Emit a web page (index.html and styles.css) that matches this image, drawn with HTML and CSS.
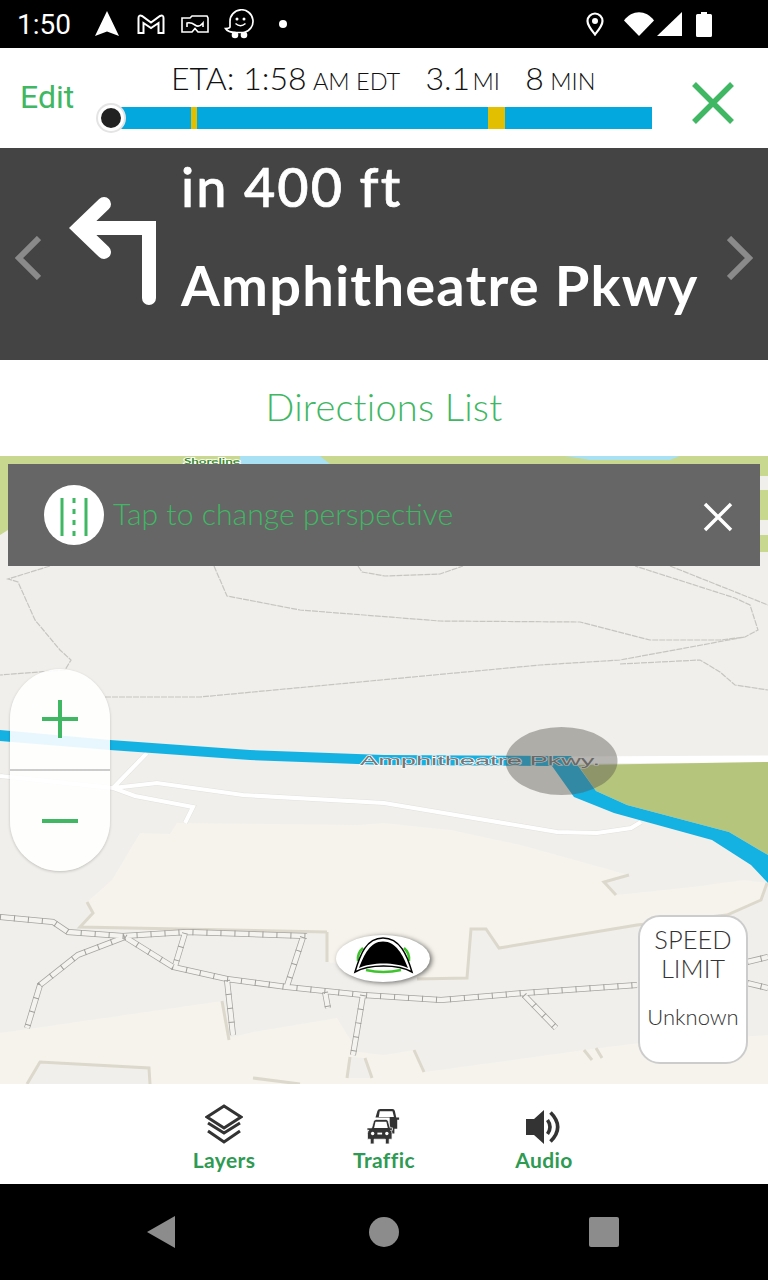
FILE: index.html
```html
<!DOCTYPE html>
<html lang="en">
<head>
    <meta charset="UTF-8">
    <meta name="viewport" content="width=device-width, initial-scale=1.0">
    <title>Navigation</title>
    <link rel="stylesheet" href="styles.css">
</head>
<body>
    <div class="status-bar">
        <span class="clock">1:50</span>
        <svg class="st-nav" viewBox="0 0 24 26"><path d="M12 0 24 25 12 20.500 0 25Z" fill="#fff"/></svg>
        <svg class="st-mail" viewBox="0 0 28 20"><path d="M1.500 4Q1.500 .5 5 2L14 8.500 23 2Q26.500 .5 26.500 4V19H21.500V9L14 14 6.500 9V19H1.500Z" fill="none" stroke="#fff" stroke-width="2"/></svg>
        <svg class="st-map" viewBox="0 0 28 18"><path d="M1 3H9L11 1H26L27 3V17H17L14 13.500 11 17H1Z" fill="none" stroke="#fff" stroke-width="1.600"/><path d="M6 12V8Q10 7 14 10T22 8V12" fill="none" stroke="#fff" stroke-width="1.600"/></svg>
        <svg class="st-waze" viewBox="0 0 30 30"><path d="M6 18C6 16 6 14 6 12.500A11.500 11.500 0 1 1 20 23.500H12C8 23.500 3 22 1.500 19.500 3 19.500 5.500 19.500 6 18Z" fill="none" stroke="#fff" stroke-width="1.700"/><circle cx="11" cy="26" r="3.300" fill="#fff"/><circle cx="20" cy="26" r="3.300" fill="#fff"/><circle cx="13" cy="10" r="1.500" fill="#fff"/><circle cx="20" cy="10" r="1.500" fill="#fff"/><path d="M11.500 14.500Q16.500 19 21.500 14.500" fill="none" stroke="#fff" stroke-width="1.500"/></svg>
        <span class="st-dot"></span>
        <span class="st-spacer"></span>
        <svg class="st-pin" viewBox="0 0 18 24"><path d="M9 22.500C5 17.500 1.500 13.500 1.500 9A7.500 7.500 0 0 1 16.500 9C16.500 13.500 13 17.500 9 22.500Z" fill="none" stroke="#fff" stroke-width="2.200"/><circle cx="9" cy="9" r="3" fill="#fff"/></svg>
        <svg class="st-wifi" viewBox="0 0 30 24"><path d="M0 8.500C8 -2.500 22 -2.500 30 8.500L15 24Z" fill="#fff"/></svg>
        <svg class="st-cell" viewBox="0 0 25 24"><path d="M25 0V24H0Z" fill="#fff"/></svg>
        <svg class="st-batt" viewBox="0 0 16 25"><path d="M5 0H11V2H14.500Q16 2 16 3.500V23.500Q16 25 14.500 25H1.500Q0 25 0 23.500V3.500Q0 2 1.500 2H5Z" fill="#fff"/></svg>
    </div>

    <div class="trip-bar">
        <div class="edit-btn">Edit</div>
        <div class="trip-info">
            <div class="trip-meta">
                <span class="big">ETA: 1:58</span> <span class="small">AM EDT</span>
                <span class="big gap">3.1</span> <span class="small tight">MI</span>
                <span class="big gap">8</span> <span class="small">MIN</span>
            </div>
            <div class="progress">
                <span class="knob"></span>
                <span class="slow slow-a"></span>
                <span class="slow slow-b"></span>
            </div>
        </div>
        <svg class="close-btn" viewBox="0 0 44 44"><path d="M3 3 41 41M41 3 3 41" stroke="#3fb763" stroke-width="5.500" fill="none"/></svg>
    </div>

    <div class="turn-panel">
        <svg class="chev" viewBox="0 0 26 44"><path d="M24 2 4 22 24 42" fill="none" stroke="#8a8a8a" stroke-width="6"/></svg>
        <svg class="turn-arrow" viewBox="0 0 88 110"><path d="M80 102V32H10M35 8 10 32 35 56" fill="none" stroke="#fff" stroke-width="14" stroke-linecap="round" stroke-linejoin="miter"/></svg>
        <div class="turn-text">
            <div class="turn-dist">in 400 ft</div>
            <div class="turn-road">Amphitheatre Pkwy</div>
        </div>
        <svg class="chev chev-right" viewBox="0 0 26 44"><path d="M2 2 22 22 2 42" fill="none" stroke="#8a8a8a" stroke-width="6"/></svg>
    </div>

    <div class="directions-link">Directions List</div>

    <div class="map">
        <svg class="map-canvas" viewBox="0 456 768 628">
            <defs>
                <path id="paths" d="M0 917 53 922 68 932 123 936 187 932 307 936M125 937 78 955 40 985 27 1028M125 937 173 967 227 979 287 987 363 995 441 1000 524 993 637 985M185 933 175 966M303 937 287 986M227 980 233 1035M325 992 328 1008M363 995 353 1055M524 995 556 1028M747 962 768 957M747 983 768 988"/>
                <path id="trails" d="M50 566 8 579 18 582 35 620 60 650 71 660 65 670 0 675M214 566 227 596 300 610 440 621 580 622 650 640 720 640 745 637 758 630 750 605 735 598 635 566M105 697 200 697 540 665 620 660 745 637M620 664 700 660 720 672 735 685 768 690M358 566 362 572 385 576 440 574 463 566M670 566 768 605"/>
            </defs>
            <rect x="0" y="456" width="768" height="628" fill="#f0efeb"/>
            <path d="M0 456H768V476H0ZM0 456H8V530L0 535ZM760 490H768V520H760ZM760 535H768V552H760Z" fill="#c8d88e"/>
            <path d="M240 456H320L330 464H240ZM565 456H680L670 460H590Z" fill="#a8e0f4"/>
            <text class="map-place" x="184" y="463.500" textLength="56" lengthAdjust="spacingAndGlyphs">Shoreline</text>

            <path d="M140 833 170 834 177 823 358 825 384 823 451 830 521 845 629 875 604 882 616 895 692 887 744 880 767 883 761 900 727 915 637 925 499 948 486 929 471 929 467 978 417 979 327 962 327 932 80 927 93 913 87 902 112 880Z" fill="#f6f3ec"/>
            <path d="M0 1033 222 1001 228 1038 253 1032 337 1018 358 1052 384 1055 414 1050 424 1072 584 1050 639 1043 768 1035V1084H0Z" fill="#f6f3ec"/>
            <path d="M350 1057 365 1058 372 1078 347 1078ZM40 1062 149 1068 150 1084H27Z" fill="#f0efeb"/>
            <path class="map-edge" d="M629 875 604 882 616 895M767 883 761 900 727 915 637 925 499 948 486 929 471 929 467 978 417 979M327 932 327 962M327 932 80 927 93 913 87 902M414 1050 424 1072M584 1050 592 1060M596 1048 602 1058M27 1084 40 1062 149 1068 150 1084M350 1057 347 1078M365 1058 372 1078M253 1078 300 1084M222 1001 229 1040" />

            <use href="#trails" class="trail-a"/>

            <path d="M0 776 113 788 157 783 243 795 384 803 557 832 597 833 631 828 641 822M147 753 113 788 135 796 193 807 185 823" class="road-case"/>
            <path d="M0 776 113 788 157 783 243 795 384 803 557 832 597 833 631 828 641 822M147 753 113 788 135 796 193 807 185 823" class="road"/>
            <path d="M571 760 768 759" class="road-wide"/>
            <path d="M578 765 768 762V855L729 832 627 805 596 791Z" fill="#b5c57b"/>
            <path d="M0 730 110 740 250 750 384 755 571 756 596 791 627 805 729 832 768 855V883L751 865 712 840 614 813 574 797 552 766 384 765 250 760 110 750 0 741Z" fill="#14b1e3"/>

            <use href="#paths" class="rail-a"/>
            <use href="#paths" class="rail-b"/>
            <use href="#paths" class="rail-c"/>

            <text class="map-label" x="360" y="765" textLength="240" lengthAdjust="spacingAndGlyphs">Amphitheatre Pkwy.</text>
            <ellipse cx="561.500" cy="761" rx="56" ry="34" fill="#5a554f" opacity=".43"/>
        </svg>

        <div class="tip">
            <span class="tip-icon">
                <svg viewBox="0 0 60 60"><path d="M18 13V51M42 13V51" stroke="#3fb763" stroke-width="3" fill="none"/><path d="M30 13V51" stroke="#3fb763" stroke-width="3" stroke-dasharray="5 6" fill="none"/></svg>
            </span>
            <span class="tip-text">Tap to change perspective</span>
            <svg class="tip-close" viewBox="0 0 30 30"><path d="M2 2 28 28M28 2 2 28" stroke="#fff" stroke-width="3.500" fill="none"/></svg>
        </div>

        <div class="zoom-ctl">
            <div class="zoom-btn">
                <svg viewBox="0 0 36 38"><path d="M0 19H36M18 0V38" stroke="#3fb763" stroke-width="4" fill="none"/></svg>
            </div>
            <div class="zoom-btn">
                <svg viewBox="0 0 36 38"><path d="M0 19H36" stroke="#3fb763" stroke-width="4" fill="none"/></svg>
            </div>
        </div>

        <div class="marker">
            <svg viewBox="0 0 94 47">
                <path d="M22 26Q21 18 27 13M73 26Q74 18 68 13M30 35Q47 39 65 35" fill="none" stroke="#3fc42e" stroke-width="2.500"/>
                <path d="M19 37C24 20 30 3 47 3 64 3 71 20 76 37 62 29 33 29 19 37Z" fill="#fff" stroke="#000" stroke-width="1.500"/>
                <path d="M23 33C28 20 34 6.500 47 6.500 60 6.500 67 20 72 33 60 27 35 27 23 33Z" fill="#000"/>
            </svg>
        </div>

        <div class="speed-limit">
            <div class="speed-title">SPEED<br>LIMIT</div>
            <div class="speed-value">Unknown</div>
        </div>
    </div>

    <div class="tool-bar">
        <div class="tool">
            <svg class="icon-layers" viewBox="0 0 38 40"><path d="M19 2 36 13 19 24 2 13Z" fill="none" stroke="#333" stroke-width="3"/><path d="M3 19 19 29 35 19M3 27 19 38 35 27" fill="none" stroke="#333" stroke-width="3"/></svg>
            <span>Layers</span>
        </div>
        <div class="tool">
            <svg class="icon-traffic" viewBox="0 0 36 38">
                <path d="M9 10 11 3Q11.500 1 14 1H27Q29 1 29.500 3L31 10H34V12.500H32V22H29V27H24V10H10Z" fill="#333"/>
                <path d="M12.500 9.500 13.500 3.500H27L28.500 9.500Z" fill="#fff"/>
                <path d="M5 21 7 14Q7.500 12 10 12H20Q22 12 22.500 14L24.500 21H27V23.500H25Q26.500 24.500 26.500 27V33H23.500V38H19.500V33H7.500V38H3.500V33H.5V27Q.5 24.500 2 23.500H0V21Z" fill="#333" stroke="#fff" stroke-width=".8"/>
                <path d="M9 14.500 7.500 21H22L20.500 14.500Z" fill="#fff"/>
                <circle cx="6" cy="27" r="1.800" fill="#fff"/><circle cx="21" cy="27" r="1.800" fill="#fff"/>
                <path d="M11 27H16" stroke="#fff" stroke-width="2"/>
            </svg>
            <span>Traffic</span>
        </div>
        <div class="tool">
            <svg class="icon-audio" viewBox="0 0 36 34"><path d="M0 9H8L18 0V34L8 25H0Z" fill="#333"/><path d="M21.500 10Q26.500 17 21.500 24M24.500 2.500Q39 17 24.500 31.500" fill="none" stroke="#333" stroke-width="3.600"/></svg>
            <span>Audio</span>
        </div>
    </div>

    <div class="nav-bar">
        <svg class="nav-back" viewBox="0 0 28 32"><path d="M28 0V32L0 16Z" fill="#8c8c8c"/></svg>
        <span class="nav-home"></span>
        <span class="nav-recent"></span>
    </div>
</body>
</html>
```

FILE: styles.css
```css
body {
    margin: 0;
    width: 768px;
    font-family: "Lato", "Open Sans", sans-serif;
    background: #fff;
}

/* status bar */
.status-bar {
    height: 48px;
    background: #000;
    display: flex;
    align-items: center;
    padding-left: 17px;
    box-sizing: border-box;
}
.clock {
    font-family: "Roboto", sans-serif;
    font-size: 28px;
    color: #fff;
    width: 78px;
}
.status-bar svg {
    flex: none;
}
.st-nav { width: 24px; height: 26px; }
.st-mail { width: 28px; height: 20px; margin-left: 18px; }
.st-map { width: 28px; height: 18px; margin-left: 16px; }
.st-waze { width: 30px; height: 30px; margin-left: 15px; }
.st-dot {
    width: 8px;
    height: 8px;
    border-radius: 50%;
    background: #fff;
    margin-left: 25px;
}
.st-spacer { flex: 1; }
.st-pin { width: 18px; height: 24px; }
.st-wifi { width: 30px; height: 24px; margin-left: 20px; }
.st-cell { width: 25px; height: 24px; margin-left: 3px; }
.st-batt { width: 16px; height: 25px; margin-left: 14px; margin-right: 56px; }

/* trip header */
.trip-bar {
    height: 100px;
    display: flex;
    position: relative;
}
.edit-btn {
    width: 111px;
    padding: 30px 0 0 20px;
    box-sizing: border-box;
    font-family: "Roboto", sans-serif;
    font-size: 32px;
    color: #3fb763;
}
.trip-info {
    width: 541px;
    padding-top: 10px;
    box-sizing: border-box;
}
.trip-meta {
    height: 49px;
    padding-left: 60px;
    white-space: nowrap;
    color: #111;
    font-weight: 300;
}
.big { font-size: 32px; }
.small { font-size: 23.500px; margin-left: 2px; }
.tight { margin-left: -2px; }
.gap { margin-left: 21px; }
.progress {
    height: 22px;
    background: #02a8de;
    position: relative;
}
.knob {
    position: absolute;
    left: -13px;
    top: -2px;
    width: 20px;
    height: 20px;
    background: #222;
    border: 3px solid #fff;
    border-radius: 50%;
    box-shadow: 0 0 0 2px #e4e4e4;
}
.slow {
    position: absolute;
    top: 0;
    bottom: 0;
    background: #e2bf00;
}
.slow-a { left: 80px; width: 6px; }
.slow-b { left: 377px; width: 17px; }
.close-btn {
    width: 44px;
    height: 44px;
    margin: 33px 0 0 39px;
}

/* turn panel */
.turn-panel {
    height: 212px;
    background: #444;
    display: flex;
    align-items: center;
    position: relative;
}
.chev {
    width: 26px;
    height: 44px;
    flex: none;
    margin-left: 15px;
    margin-top: 8px;
}
.chev-right {
    margin-left: 23px;
}
.turn-arrow {
    width: 88px;
    height: 110px;
    flex: none;
    margin: -7px 0 0 28px;
}
.turn-text {
    width: 523px;
    margin-left: 24px;
    color: #fff;
    white-space: nowrap;
}
.turn-dist {
    font-size: 54px;
    font-weight: 500;
    line-height: 64px;
    margin-top: -36px;
    letter-spacing: 2px;
    -webkit-text-stroke: 0.7px #fff;
}
.turn-road {
    font-size: 56px;
    font-weight: 700;
    line-height: 64px;
    margin-top: 34px;
    letter-spacing: 1.200px;
}

.directions-link {
    height: 96px;
    line-height: 92px;
    text-align: center;
    font-size: 38px;
    font-weight: 300;
    letter-spacing: 0.200px;
    color: #3fb763;
}

/* map */
.map {
    height: 628px;
    position: relative;
    overflow: hidden;
}
.map-canvas {
    position: absolute;
    left: 0;
    top: 0;
    width: 768px;
    height: 628px;
}
.map-place {
    font-size: 7.500px;
    font-weight: 700;
    fill: #3d8a2c;
    stroke: #fff;
    stroke-width: 1.500px;
    paint-order: stroke;
}
.map-label {
    font-family: "Liberation Sans", sans-serif;
    font-size: 13px;
    fill: #777;
    stroke: #fff;
    stroke-width: 1px;
    paint-order: stroke;
}
.map-edge {
    fill: none;
    stroke: #dcd8cc;
    stroke-width: 3px;
}
.trail-a {
    fill: none;
    stroke: #c6c5c0;
    stroke-width: 1.200px;
    stroke-dasharray: 6 1;
}
.road-case {
    fill: none;
    stroke: #e2e1dc;
    stroke-width: 5px;
}
.road {
    fill: none;
    stroke: #fff;
    stroke-width: 4px;
}
.road-wide {
    fill: none;
    stroke: #fff;
    stroke-width: 7px;
}
.rail-a {
    fill: none;
    stroke: #a5a4a0;
    stroke-width: 6px;
}
.rail-b {
    fill: none;
    stroke: #f4f3ef;
    stroke-width: 4.500px;
}
.rail-c {
    fill: none;
    stroke: #a09f9b;
    stroke-width: 6px;
    stroke-dasharray: 1 13;
}

.tip {
    position: absolute;
    left: 8px;
    top: 8px;
    width: 752px;
    height: 102px;
    background: #666;
    display: flex;
    align-items: center;
}
.tip-icon {
    width: 60px;
    height: 60px;
    margin-left: 36px;
    background: #fff;
    border-radius: 50%;
    flex: none;
}
.tip-icon svg {
    display: block;
    width: 60px;
    height: 60px;
}
.tip-text {
    margin-left: 9px;
    font-size: 30.200px;
    font-weight: 300;
    color: #3fb763;
    flex: 1;
    padding-bottom: 5px;
}
.tip-close {
    width: 30px;
    height: 30px;
    margin-right: 27px;
    margin-top: 4px;
}

.zoom-ctl {
    position: absolute;
    left: 10px;
    top: 213px;
    width: 100px;
    height: 202px;
    border-radius: 50px;
    background: rgba(255, 255, 255, 0.9);
    box-shadow: 0 1px 3px rgba(0, 0, 0, 0.2);
    display: flex;
    flex-direction: column;
}
.zoom-btn {
    flex: 1;
    display: flex;
    align-items: center;
    justify-content: center;
}
.zoom-btn:first-child {
    border-bottom: 2px solid #ccc;
}
.zoom-btn svg {
    width: 36px;
    height: 38px;
}

.marker {
    position: absolute;
    left: 336px;
    top: 479px;
    width: 94px;
    height: 47px;
    background: #fff;
    border-radius: 50%;
    box-shadow: 2px 1px 5px rgba(0, 0, 0, 0.55);
}
.marker svg {
    display: block;
    width: 94px;
    height: 47px;
}

.speed-limit {
    position: absolute;
    left: 638px;
    top: 459px;
    width: 110px;
    height: 149px;
    box-sizing: border-box;
    background: #fff;
    border: 2px solid #ccc;
    border-radius: 22px;
    text-align: center;
    color: #333;
    font-weight: 300;
}
.speed-title {
    font-size: 25.500px;
    line-height: 29px;
    margin-top: 8px;
}
.speed-value {
    font-size: 22px;
    margin-top: 20px;
}

/* bottom tools */
.tool-bar {
    height: 100px;
    display: flex;
    justify-content: center;
    background: #fff;
}
.tool {
    width: 160px;
    height: 100px;
    display: flex;
    flex-direction: column;
    align-items: center;
    justify-content: flex-end;
    padding-bottom: 12px;
    box-sizing: border-box;
    font-size: 21px;
    font-weight: 700;
    letter-spacing: 0.400px;
    color: #2e9a52;
}
.tool svg {
    margin-bottom: 3px;
}
.icon-layers { width: 38px; height: 40px; }
.icon-traffic { width: 34px; height: 36px; }
.icon-audio { width: 36px; height: 34px; }

.nav-bar {
    height: 96px;
    background: #000;
    display: flex;
    align-items: center;
    padding-left: 147px;
}
.nav-back { width: 28px; height: 32px; }
.nav-home {
    width: 30px;
    height: 30px;
    margin-left: 194px;
    border-radius: 50%;
    background: #8c8c8c;
}
.nav-recent {
    width: 30px;
    height: 30px;
    margin-left: 190px;
    border-radius: 2px;
    background: #8c8c8c;
}
```
